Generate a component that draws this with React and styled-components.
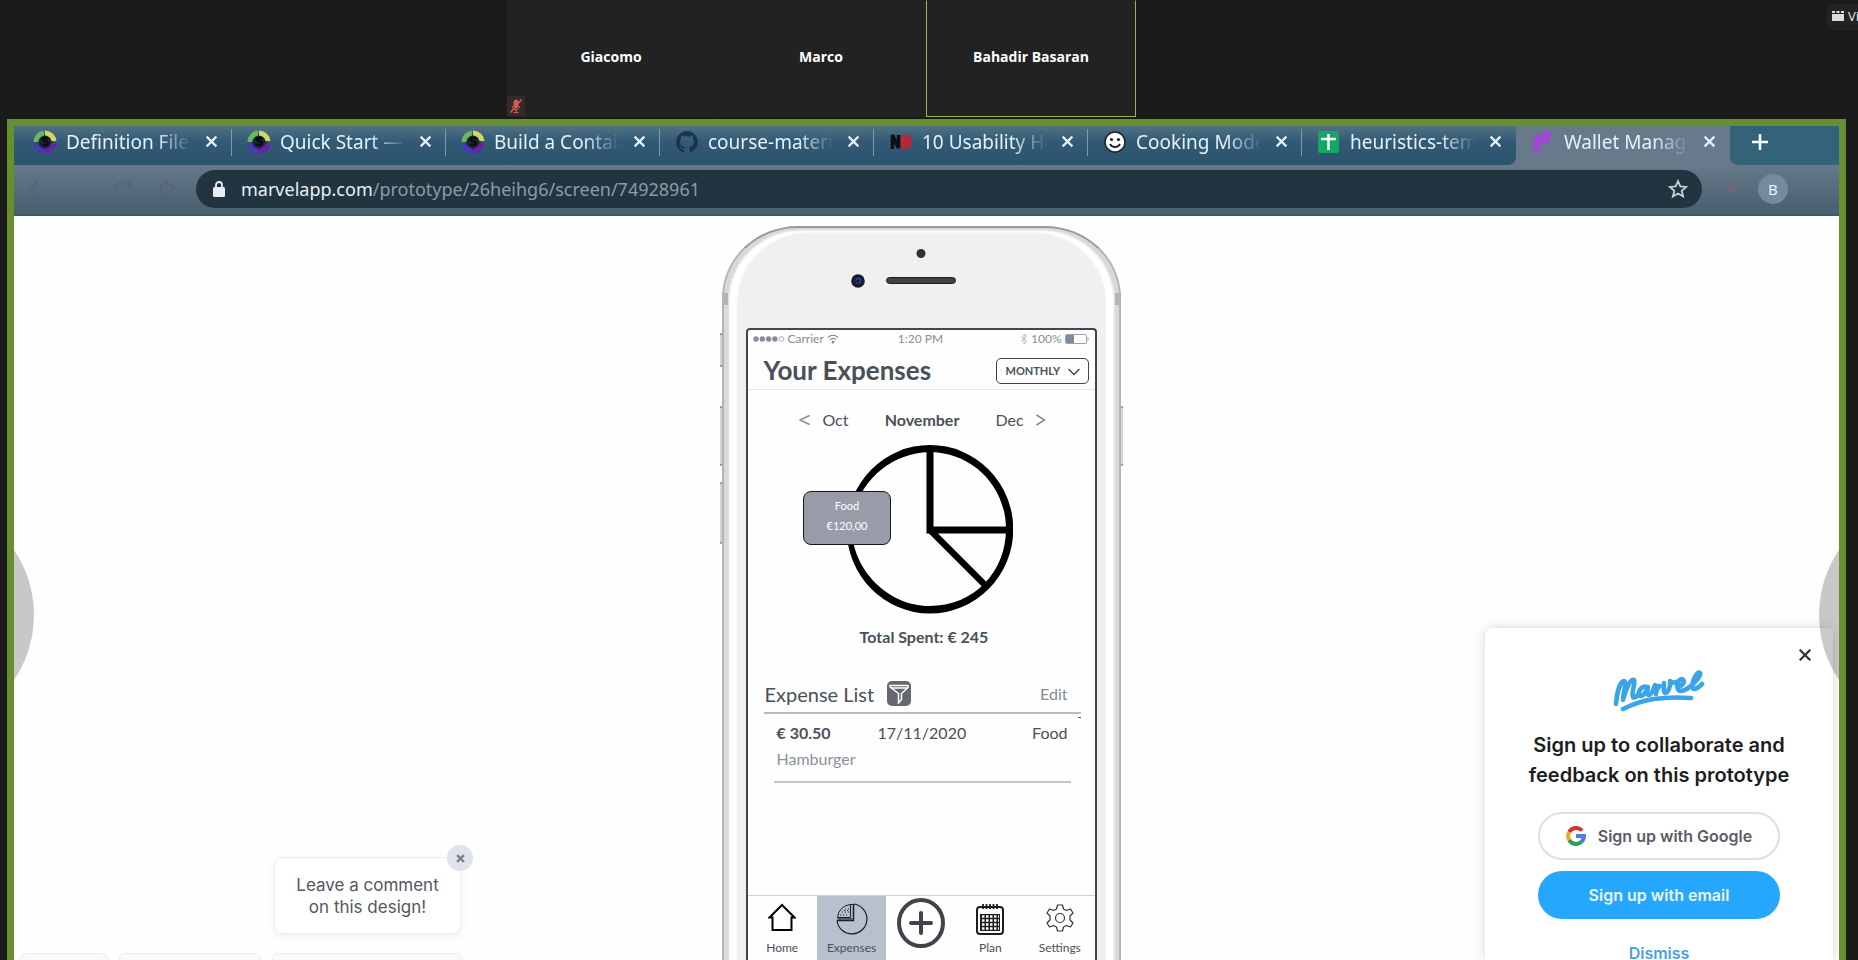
import React from "react";
import styled, { createGlobalStyle, css } from "styled-components";

const GlobalStyle = createGlobalStyle`
  *, *::before, *::after { box-sizing: border-box; }
  html, body { margin: 0; background: #1a1a1a; }
  button, select { font: inherit; color: inherit; margin: 0; padding: 0; border: 0; background: none; cursor: pointer; }
  a { color: inherit; text-decoration: none; }
  h1, h2, h3, p, ul { margin: 0; padding: 0; list-style: none; }
  svg { display: block; flex: none; }
`;

/* ---------- Meeting window ---------- */

const Meeting = styled.div`
  display: flex;
  flex-direction: column;
  height: 100vh;
  overflow: hidden;
  background: #1a1a1a;
  font-family: "Open Sans", "Noto Sans", sans-serif;
`;

const Gallery = styled.header`
  position: relative;
  display: flex;
  justify-content: center;
  flex: none;
  height: 119px;
  padding: 0 216px 2px 0;
`;

const Participant = styled.div`
  position: relative;
  display: flex;
  align-items: center;
  justify-content: center;
  width: 210px;
  padding-bottom: 4px;
  border: 1px solid ${(p) => (p.$speaking ? "#93b55c" : "#222")};
  border-top-color: #222;
  border-left-color: ${(p) => (p.$speaking ? "#93b55c" : "#1e1e1e")};
  background: #222;
  color: #fff;
  font-size: 14px;
  font-weight: 700;
  line-height: 20px;
`;

const MutedBadge = styled.span`
  position: absolute;
  left: 0;
  bottom: 0;
  display: grid;
  place-items: center;
  width: 18px;
  height: 20px;
  background: #332a2a;
`;

const ViewButton = styled.button`
  && {
    position: absolute;
    top: 4px;
    right: -36px;
    display: flex;
    align-items: center;
    gap: 4px;
    padding: 2px 6px 4px;
    width: 68px;
    height: 26px;
    border-radius: 6px;
    background: #222225;
    color: #e8e8e8;
    font-size: 13px;
    line-height: 18px;
  }
`;

const Share = styled.main`
  display: flex;
  flex-direction: column;
  flex: 1;
  min-height: 0;
  margin: 0 12px 0 7px;
  border: 7px solid #668f2d;
  border-bottom: 0;
`;

/* ---------- Browser chrome ---------- */

const TabStrip = styled.nav`
  display: flex;
  flex: none;
  height: 39px;
  padding-left: 4px;
  background: linear-gradient(#4f7183, #325a75 40%, #2d536d);
  font-family: "Noto Sans", sans-serif;
`;

const TabItem = styled.div`
  position: relative;
  display: flex;
  align-items: center;
  width: 214px;
  min-width: 0;
  padding: 0 13px 8px 15px;
  color: #e4f1f8;
  ${(p) =>
    p.$active
      ? css`
          background: #67798a;
        `
      : css`
          &::after {
            content: "";
            position: absolute;
            right: 0;
            top: 3px;
            width: 1px;
            height: 27px;
            background: ${p.$last ? "transparent" : "#7c98a9"};
          }
        `}
`;

const TabLink = styled.a`
  display: flex;
  align-items: center;
  flex: 1;
  min-width: 0;
  gap: 9px;
`;

const TabTitle = styled.span`
  flex: none;
  width: 128px;
  overflow: hidden;
  white-space: nowrap;
  font-size: 19px;
  line-height: 28px;
  mask-image: linear-gradient(90deg, #000 70%, transparent 98%);
`;

const TabClose = styled.button`
  && {
    display: grid;
    place-items: center;
    width: 16px;
    height: 28px;
  }
`;

const StripEnd = styled.div`
  flex: 1;
  padding: 3px 0 0 18px;
  border-bottom-left-radius: 8px;
  background: #346379;
  color: #fff;
`;

const Behind = styled.div`
  display: flex;
  flex: ${(p) => (p.$grow ? 1 : "none")};
  background: #67798a;
`;

const InactiveFill = styled.div`
  display: flex;
  border-bottom-right-radius: 8px;
  background: linear-gradient(#4f7183, #325a75 40%, #2d536d);
`;

const Toolbar = styled.div`
  display: flex;
  align-items: center;
  flex: none;
  height: 51px;
  padding: 5px 51px 6px 12px;
  border-bottom: 2px solid #435866;
  background: linear-gradient(#67798a, #4b6273 85%);
`;

const HistoryButtons = styled.div`
  display: flex;
  align-items: center;
  justify-content: space-between;
  width: 152px;
  margin-right: 18px;
  color: #54636f;
`;

const Omnibox = styled.div`
  display: flex;
  align-items: center;
  flex: 1;
  height: 38px;
  padding: 0 14px 0 16px;
  border-radius: 19px;
  background: #223440;
  color: #8d9ba5;
  font-family: "Noto Sans", sans-serif;
  font-size: 18px;
  line-height: 26px;
`;

const Address = styled.p`
  flex: 1;
  margin-left: 15px;
`;

const Host = styled.span`
  color: #e9f0f3;
`;

const Extension = styled.button`
  && {
    width: 12px;
    height: 12px;
    margin: 0 20px 0 24px;
    border-radius: 50%;
    background: radial-gradient(#84606f, transparent 70%);
  }
`;

const Avatar = styled.button`
  && {
    width: 30px;
    height: 30px;
    border-radius: 50%;
    background: #738b9a;
    color: #e9f2f6;
    font: 15px/30px "Noto Sans", sans-serif;
  }
`;

/* ---------- Prototype page ---------- */

const Page = styled.section`
  position: relative;
  display: flex;
  justify-content: center;
  flex: 1;
  min-height: 0;
  overflow: hidden;
  padding: 10px 11px 0 0;
  background: #fefefe;
  font-family: Inter, sans-serif;
`;

const PagerButton = styled.button`
  && {
    position: absolute;
    top: 283px;
    ${(p) => p.$side}: -212px;
    width: 232px;
    height: 232px;
    border-radius: 50%;
    background: #00000036;
  }
`;

const Phone = styled.div`
  position: relative;
  display: flex;
  flex-direction: column;
  width: 399px;
  padding: 0 22px;
  border: 2px solid #b4b4b6;
  border-top-color: #999;
  border-bottom: 0;
  border-radius: 76px 76px 0 0 / 72px 72px 0 0;
  background: #eff0f2;
  box-shadow: inset 5px 2px 2px #d9d9db, inset -5px 2px 2px #d9d9db,
    inset 13px 4px 2px #fff, inset -13px 4px 2px #fff;
`;

const SideKey = styled.span`
  position: absolute;
  ${(p) => p.$side}: -4px;
  top: ${(p) => p.$top}px;
  width: 2px;
  height: ${(p) => p.$length}px;
  border: 1px solid #909092;
  border-width: 2px 0;
  border-radius: 2px;
  background: #d4d4d6;
`;

const AntennaBand = styled.span`
  position: absolute;
  ${(p) => p.$side}: -2px;
  top: 65px;
  width: 6px;
  height: 12px;
  background: #b4b4b7;
`;

const Earpiece = styled.div`
  display: flex;
  justify-content: center;
  flex: none;
  height: 100px;
  padding-top: 21px;
`;

const Screen = styled.div`
  display: flex;
  flex-direction: column;
  flex: 1;
  min-height: 0;
  border: 2px solid #454648;
  border-bottom: 0;
  border-radius: 4px 4px 0 0;
  background: #fefefe;
  color: #4a5058;
  font-family: Lato, sans-serif;
`;

const StatusBar = styled.div`
  display: grid;
  grid-template-columns: 1fr auto 1fr;
  align-items: center;
  height: 18px;
  padding: 0 6px 0 5px;
  color: #868d98;
  font-size: 12px;
  line-height: 16px;
`;

const StatusGroup = styled.span`
  display: flex;
  align-items: center;
  justify-content: ${(p) => (p.$end ? "flex-end" : "flex-start")};
  gap: 3px;
`;

const ScreenHeader = styled.header`
  display: flex;
  align-items: center;
  justify-content: space-between;
  height: 42px;
  padding: 2px 6px 0 16px;
  border-bottom: 1px solid #e4e5e7;
`;

const ScreenTitle = styled.h1`
  font-size: 26px;
  font-weight: 700;
  line-height: 32px;
`;

const Picker = styled.label`
  position: relative;
  display: flex;
  align-items: center;
  width: 93px;
  height: 26px;
  margin-top: 3px;
  border: 1px solid #3f444a;
  border-radius: 5px;

  svg { position: absolute; right: 8px; top: 9px; pointer-events: none; }
`;

const PeriodSelect = styled.select`
  && {
    width: 100%;
    height: 100%;
    padding: 0 24px 2px 9px;
    appearance: none;
    font-size: 11px;
    font-weight: 700;
  }
`;

const Months = styled.nav`
  display: grid;
  grid-template-columns: 1fr auto 1fr;
  align-items: center;
  height: 60px;
  padding: 0 49px 0 51px;
  font-size: 16px;
  line-height: 22px;
`;

const MonthButton = styled.button`
  && {
    display: flex;
    align-items: center;
    justify-content: space-between;
    width: 50px;
    justify-self: ${(p) => (p.$next ? "end" : "start")};
  }
  svg { color: #838995; }
`;

const CurrentMonth = styled.strong`
  font-weight: 700;
`;

const Chart = styled.figure`
  position: relative;
  align-self: center;
  margin: -5px 0 0 18px;
`;

const SliceTip = styled.figcaption`
  position: absolute;
  left: -44px;
  top: 46px;
  width: 88px;
  height: 54px;
  padding-top: 4px;
  border: 1px solid #17191c;
  border-radius: 8px;
  background: #979ca8;
  color: #fff;
  font-size: 11px;
  line-height: 20px;
  text-align: center;
`;

const Total = styled.p`
  margin-top: 12px;
  padding-left: 6px;
  font-size: 16px;
  font-weight: 700;
  line-height: 22px;
  text-align: center;
`;

const ListHeader = styled.header`
  display: flex;
  align-items: center;
  margin: 29px 14px 0 16px;
  height: 37px;
  padding: 0 13px 2px 1px;
  border-bottom: 2px solid #b9babc;
`;

const ListTitle = styled.h2`
  font-size: 20px;
  font-weight: 400;
  line-height: 28px;
`;

const FilterButton = styled.button`
  && {
    display: grid;
    place-items: center;
    width: 24px;
    height: 25px;
    margin-left: 13px;
    border-radius: 5px;
    background: #65686e;
    color: #fff;
  }
`;

const EditButton = styled.button`
  && {
    margin-left: auto;
    color: #858b96;
    font-size: 16px;
  }
`;

const ListMark = styled.span`
  align-self: flex-end;
  width: 3px;
  height: 1px;
  margin: 3px 14px 0 0;
  background: #555;
`;

const Expense = styled.li`
  display: grid;
  grid-template-columns: 101px 1fr auto;
  margin: 2px 24px 0 26px;
  padding: 0 3px 9px;
  border-bottom: 2px solid #c4c5c7;
  font-size: 16px;
  line-height: 26px;
`;

const Amount = styled.strong`
  font-weight: 700;
`;

const Note = styled.span`
  grid-column: 1 / -1;
  color: #8a919c;
`;

const AppNav = styled.nav`
  display: grid;
  grid-template-columns: repeat(5, 1fr);
  height: 65px;
  margin-top: auto;
  border-top: 1px solid #cfd2d5;
`;

const NavItem = styled.a`
  display: flex;
  flex-direction: column;
  align-items: center;
  justify-content: space-between;
  padding: 2px 0 4px;
  background: ${(p) => (p.$active ? "#b7c0cc" : "transparent")};
  font-size: 12px;
  line-height: 16px;

  svg { margin-top: ${(p) => (p.$large ? 0 : 5)}px; }
`;

/* ---------- Page overlays ---------- */

const CommentHint = styled.aside`
  position: absolute;
  left: 260px;
  bottom: 26px;
  width: 187px;
  padding: 16px 12px 15px;
  border: 1px solid #ededf2;
  border-radius: 8px;
  background: #fff;
  box-shadow: 0 3px 8px #0000000f;
  color: #55565f;
  font-size: 17px;
  line-height: 22px;
  text-align: center;
`;

const HintClose = styled.button`
  && {
    position: absolute;
    top: -13px;
    right: -13px;
    display: grid;
    place-items: center;
    width: 26px;
    height: 26px;
    border-radius: 50%;
    background: #dfe3ee;
    color: #7b7f8c;
  }
`;

const Dock = styled.div`
  position: absolute;
  left: 6px;
  bottom: 0;
  display: grid;
  grid-template-columns: 88px 142px 190px;
  gap: 11px;
  height: 7px;
`;

const DockPanel = styled.div`
  border: 1px solid #ececf1;
  border-bottom: 0;
  border-radius: 6px 6px 0 0;
  background: #f9f9fc;
`;

const SignUp = styled.aside`
  position: absolute;
  top: 412px;
  right: 6px;
  bottom: 0;
  display: flex;
  flex-direction: column;
  align-items: center;
  width: 348px;
  padding-top: 42px;
  border-radius: 8px 0 0 0;
  background: #fff;
  box-shadow: 0 0 12px #00003028;
`;

const SignUpClose = styled.button`
  && {
    position: absolute;
    top: 18px;
    right: 19px;
    padding: 2px;
    color: #333338;
  }
`;

const SignUpTitle = styled.h2`
  margin: 18px 0 22px;
  color: #1d1d22;
  font-size: 20px;
  font-weight: 600;
  line-height: 30px;
  text-align: center;
`;

const PillButton = styled.button`
  && {
    display: flex;
    flex: none;
    align-items: center;
    justify-content: center;
    gap: 12px;
    width: 242px;
    height: 48px;
    margin-bottom: 11px;
    border: ${(p) => (p.$primary ? "0" : "2px solid #dedee4")};
    border-radius: 24px;
    background: ${(p) => (p.$primary ? "#26a7fe" : "#fff")};
    color: ${(p) => (p.$primary ? "#e6f6ff" : "#5c5c68")};
    font-size: 16px;
    font-weight: 600;
  }
`;

const Dismiss = styled.button`
  && {
    margin-top: 10px;
    color: #4c9fd9;
    font-size: 16px;
    font-weight: 600;
    line-height: 26px;
  }
`;

/* ---------- Drawings ---------- */

const Cross = ({ size = 12, weight = 2 }) => (
  <svg width={size} height={size} viewBox="0 0 12 12" stroke="currentColor" strokeWidth={weight} aria-hidden="true">
    <path d="M1.5 1.5l9 9M10.5 1.5l-9 9" />
  </svg>
);

const SIcon = () => (
  <svg width="24" height="24" viewBox="0 0 24 24" fill="none" strokeWidth="5">
    <circle cx="12" cy="12" r="8" fill="#1c2733" />
    <path d="M3 12a9 9 0 0 1 8-9" stroke="#67b860" />
    <path d="M12 3a9 9 0 0 1 9 8" stroke="#d2d569" />
    <path d="M21 13a9 9 0 0 1-9 8" stroke="#6a21a8" />
    <path d="M11 21a9 9 0 0 1-8-8" stroke="#4b35bd" />
    <path d="M15 9c-2-2-6-1-5 1s5 1 5 3-4 3-6 1" stroke="#0a0c10" strokeWidth="2.4" />
  </svg>
);

const GithubIcon = () => (
  <svg width="24" height="24" viewBox="0 0 24 24">
    <path fill="#1d3446" d="M12 1A11 11 0 0 0 8.500 22.400c.6.100.8-.2.800-.5v-2c-3 .6-3.700-1.400-3.700-1.400-.5-1.200-1.200-1.600-1.200-1.600-1-.7 0-.6 0-.6 1.100 0 1.700 1.100 1.700 1.100 1 1.700 2.600 1.200 3.200.9.100-.7.400-1.200.7-1.400-2.400-.3-5-1.200-5-5.400 0-1.200.4-2.200 1.100-3-.1-.3-.5-1.400.1-2.900 0 0 .9-.3 3 1.100a10 10 0 0 1 5.500 0c2.100-1.400 3-1.100 3-1.100.6 1.500.2 2.600.1 2.900.7.800 1.100 1.800 1.100 3 0 4.200-2.600 5.100-5 5.400.4.300.7 1 .7 2v3c0 .3.200.6.800.5A11 11 0 0 0 12 1z" />
  </svg>
);

const NNIcon = () => (
  <svg width="24" height="24" viewBox="0 0 24 24" fill="none" strokeWidth="3.600">
    <path d="M3.500 19V5l6 13V5" stroke="#0c0f13" />
    <path d="M14 19V5l6 13V5" stroke="#c81f31" />
  </svg>
);

const SmileIcon = () => (
  <svg width="24" height="24" viewBox="0 0 24 24">
    <circle cx="12" cy="12" r="10" fill="#fff" stroke="#17232c" strokeWidth="1.500" />
    <circle cx="8.500" cy="9.500" r="1.600" fill="#17232c" />
    <circle cx="15.500" cy="9.500" r="1.600" fill="#17232c" />
    <path d="M7 14c2 4 8 4 10 0" fill="none" stroke="#17232c" strokeWidth="1.800" />
  </svg>
);

const SheetIcon = () => (
  <svg width="24" height="24" viewBox="0 0 24 24">
    <rect x="1" y="1" width="21" height="22" rx="2" fill="#14a765" />
    <path d="M11.500 4v16M4 9h15" stroke="#fff" strokeWidth="2.500" />
  </svg>
);

const MarvelMark = () => (
  <svg width="24" height="24" viewBox="0 0 24 24" fill="none" stroke="#a93fe6" strokeWidth="2.800" strokeLinecap="round" strokeLinejoin="round">
    <path d="M3 18C4 12 5 8 8 6c1 3-1 6-1 9 1-5 3-9 6-11 1 3-1 6-1 9 1-5 3-9 6-11 0 4-1 7-2 11M4 22c3-1 4-3 5-5" />
  </svg>
);

const MutedMic = () => (
  <svg width="14" height="16" viewBox="0 0 14 16" fill="none" stroke="#de5a5a">
    <rect x="5" y="2" width="4" height="8" rx="2" fill="#de5a5a" />
    <path d="M3.500 8c0 5 7 5 7 0M7 11v3M4.500 14.500h5" />
    <path d="M12.500 1.500l-11 13" strokeWidth="1.500" />
  </svg>
);

const GalleryIcon = () => (
  <svg width="12" height="12" viewBox="0 0 12 12" fill="#dcdcdc">
    <path d="M0 1h3v2H0zM4.500 1h3v2h-3zM9 1h3v2H9zM0 4h12v7H0z" />
  </svg>
);

const HistoryIcons = () => (
  <svg width="152" height="24" viewBox="0 0 152 24" fill="none" stroke="currentColor" strokeWidth="2">
    <path d="M12 4l-8 8 8 8M90 12c0-8 10-9 15-4M105 4v5h-6M132 12l8-8 8 8M135 11v9h10v-9" opacity=".6" />
  </svg>
);

const Padlock = () => (
  <svg width="14" height="18" viewBox="0 0 14 18">
    <rect x="1" y="7" width="12" height="10" rx="1.500" fill="#e8eff2" />
    <path d="M4 8V5a3 3 0 0 1 6 0v3" fill="none" stroke="#e8eff2" strokeWidth="1.800" />
  </svg>
);

const Star = () => (
  <svg width="20" height="20" viewBox="0 0 20 20" fill="none" stroke="#c9d0d3" strokeWidth="1.800">
    <path d="M10 2l2.300 5.400 5.900.5-4.500 3.900 1.400 5.700L10 14.500l-5.100 3 1.400-5.700L1.800 7.900l5.900-.5z" />
  </svg>
);

const Plus = () => (
  <svg width="24" height="26" viewBox="0 0 24 26" stroke="currentColor" strokeWidth="2.500">
    <path d="M12 5v16M4 13h16" />
  </svg>
);

const EarpieceDrawing = () => (
  <svg width="140" height="40" viewBox="0 0 140 40">
    <circle cx="70" cy="4.500" r="4.500" fill="#323234" />
    <circle cx="7" cy="32" r="6.800" fill="#1a1b28" />
    <circle cx="7.500" cy="31.500" r="3.200" fill="#26398f" />
    <circle cx="7" cy="32" r="1.300" fill="#101326" />
    <rect x="35.500" y="28.500" width="69" height="6" rx="3" fill="#424244" stroke="#1f1f21" />
  </svg>
);

const SignalDots = () => (
  <svg width="32" height="8" viewBox="0 0 32 8" fill="#868d98">
    <circle cx="3" cy="4" r="2.700" /><circle cx="9.300" cy="4" r="2.700" />
    <circle cx="15.600" cy="4" r="2.700" /><circle cx="21.900" cy="4" r="2.700" />
    <circle cx="28.500" cy="4" r="2.400" fill="none" stroke="#9aa0aa" strokeWidth=".8" />
  </svg>
);

const Wifi = () => (
  <svg width="12" height="10" viewBox="0 0 12 10" fill="none" stroke="#7c8592" strokeWidth="1.200">
    <path d="M1 3.500c3-3 7-3 10 0M3 5.800c2-2 4-2 6 0" /><circle cx="6" cy="8.200" r=".8" />
  </svg>
);

const Bluetooth = () => (
  <svg width="8" height="12" viewBox="0 0 8 12" fill="none" stroke="#b4b8bf">
    <path d="M1 3.500l6 5L4 11V1l3 2.500-6 5" />
  </svg>
);

const Battery = () => (
  <svg width="24" height="10" viewBox="0 0 24 10">
    <rect x=".5" y=".5" width="21" height="9" rx="1.500" fill="#fff" stroke="#9aa3b1" />
    <rect x="1" y="1" width="8" height="8" fill="#7d8ba3" />
    <path d="M23 3.500v3" stroke="#9aa3b1" />
  </svg>
);

const ChevronDown = () => (
  <svg width="12" height="8" viewBox="0 0 12 8" fill="none" stroke="#35505a" strokeWidth="1.500">
    <path d="M.5 1L6 6.500 11.500 1" />
  </svg>
);

const Angle = ({ next }) => (
  <svg width="11" height="12" viewBox="0 0 11 12" fill="none" stroke="currentColor" strokeWidth="1.500">
    <path d={next ? "M1.500 1l8 5-8 5" : "M10.500 1.500L1 6l9.500 4.500"} />
  </svg>
);

const Pie = () => (
  <svg width="166" height="169" viewBox="0 0 166 169" fill="none" stroke="#000">
    <path
      d="M83 0A83 84 0 0 1 83 168.500A83 84 0 0 1 83 0ZM82 7C40 8 5 43 5 84S42 161 82 161C128 161 159 126 159 84S126 7 82 7Z"
      fill="#000"
      fillRule="evenodd"
      stroke="none"
    />
    <path d="M83 4v81h77" strokeWidth="7" />
    <path d="M82 84l56 56" strokeWidth="6.500" />
  </svg>
);

const Funnel = () => (
  <svg width="20" height="20" viewBox="0 0 20 20" fill="none" stroke="currentColor" strokeWidth="1.500">
    <path d="M1 1.500h18v2l-6.500 6v6L9.500 19V9.500L1 3z" />
    <path d="M2 4h16" />
  </svg>
);

const HomeIcon = () => (
  <svg width="28" height="28" viewBox="0 0 28 28" fill="none" stroke="#000" strokeWidth="2">
    <path d="M1.500 14.500L14 2l12.500 12.500h-3V27h-19V14.500z" />
  </svg>
);

const ExpensesIcon = () => (
  <svg width="32" height="32" viewBox="0 0 32 32" fill="none" stroke="#1c1f24">
    <path d="M17.500 1A15 15 0 1 1 1 17.500" strokeWidth="1.200" />
    <path d="M17.500 1v16.500H1" strokeWidth="1.500" />
    <path d="M14.500 1.500v13H1.500A14 14 0 0 1 14.500 1.500zM14.500 1.500h3" />
    <path d="M1.500 16h15" strokeWidth="2" stroke="#555b64" />
    <path d="M6 9h7M9 6h4M4 12h9M8 7.500h5" strokeWidth="1" strokeDasharray="1 2" />
  </svg>
);

const AddIcon = () => (
  <svg width="48" height="50" viewBox="0 0 48 50" fill="none" stroke="#3f444a">
    <ellipse cx="24" cy="25" rx="22" ry="23" strokeWidth="4" />
    <path d="M24 15v20M14 25h20" strokeWidth="4" strokeLinecap="round" />
  </svg>
);

const PlanIcon = () => (
  <svg width="28" height="32" viewBox="0 0 28 32" fill="none" stroke="#1b1d20">
    <rect x="1" y="4" width="26" height="27" rx="3" strokeWidth="2" />
    <path d="M7 1v5M10.500 1v5M14 1v5M17.500 1v5M21 1v5" strokeWidth="1.800" />
    <rect x="4" y="11" width="20" height="17" fill="#1b1d20" stroke="none" />
    <path d="M6 13.500h17M6 17.500h17M6 21.500h17M6 25.500h17" stroke="#fff" strokeWidth="2.500" strokeDasharray="2.500 1.500" />
  </svg>
);

const SettingsIcon = () => (
  <svg width="28" height="30" viewBox="0 0 28 30" fill="none" stroke="#2e3338" strokeWidth="1.200">
    <path d="M11.500 2h5l1 4 3 1.500 4-1.500L27 10l-3 3v4l3 3-2.500 4-4-1.500-3 1.500-1 4h-5l-1-4-3-1.500-4 1.500L1 20l3-3v-4l-3-3 2.500-4 4 1.500 3-1.500z" strokeLinejoin="round" />
    <circle cx="14" cy="15" r="4.500" />
  </svg>
);

const MarvelLogo = () => (
  <svg width="92" height="42" viewBox="0 0 92 42" fill="none" stroke="#39a4e8" strokeWidth="4.600" strokeLinecap="round" strokeLinejoin="round" role="img" aria-label="Marvel">
    <path d="M3 34C4 22 7 12 11 11c3 0-1 14-1 19 3-12 8-22 11-20 2 2-3 12-1 17 1 1 3 0 5-2" />
    <path d="M34 17c-5-2-9 4-8 8 2 3 7-1 9-8-1 5-1 8 1 8s4-4 6-10c0 3 3 1 5 1-3 2-4 5-4 8" />
    <path d="M51 13c0 6-1 9 1 10 3 0 6-7 5-12 2 2 4 2 6 1" />
    <path d="M65 17c5-1 8-7 4-8-5 0-7 12-1 12 9-1 21-16 19-18-4-3-11 16-6 16 3 0 6-3 8-5" />
    <path d="M10 39c20-10 40-13 68-11" />
  </svg>
);

const GoogleLogo = () => (
  <svg width="20" height="20" viewBox="0 0 20 20" fill="none" strokeWidth="4">
    <path d="M16 4.500A8 8 0 0 0 3.200 6.100" stroke="#d9332c" />
    <path d="M3.200 6.100a8 8 0 0 0 0 7.800" stroke="#eda928" />
    <path d="M3.200 13.900A8 8 0 0 0 15 16.200" stroke="#2f9d50" />
    <path d="M15 16.200A8 8 0 0 0 18 10h-8" stroke="#4d7fe0" />
  </svg>
);

/* ---------- Data ---------- */

const participants = [
  { name: "Giacomo", muted: true },
  { name: "Marco" },
  { name: "Bahadir Basaran", speaking: true },
];

const inactiveTabs = [
  { title: "Definition Files", Icon: SIcon },
  { title: "Quick Start —", Icon: SIcon },
  { title: "Build a Container", Icon: SIcon },
  { title: "course-material", Icon: GithubIcon },
  { title: "10 Usability Heur", Icon: NNIcon },
  { title: "Cooking Mode", Icon: SmileIcon },
  { title: "heuristics-temp", Icon: SheetIcon },
];

const navItems = [
  { label: "Home", Icon: HomeIcon },
  { label: "Expenses", Icon: ExpensesIcon, active: true },
  { label: "", Icon: AddIcon, large: true },
  { label: "Plan", Icon: PlanIcon },
  { label: "Settings", Icon: SettingsIcon },
];

const Tab = ({ title, Icon, active, last }) => (
  <TabItem $active={active} $last={last}>
    <TabLink href="#tab">
      <Icon />
      <TabTitle>{title}</TabTitle>
    </TabLink>
    <TabClose aria-label={`Close ${title}`}>
      <Cross size={13} />
    </TabClose>
  </TabItem>
);

const PhoneApp = () => (
  <Screen>
    <StatusBar>
      <StatusGroup><SignalDots />Carrier<Wifi /></StatusGroup>
      <span>1:20 PM</span>
      <StatusGroup $end><Bluetooth />100%<Battery /></StatusGroup>
    </StatusBar>
    <ScreenHeader>
      <ScreenTitle>Your Expenses</ScreenTitle>
      <Picker>
        <PeriodSelect aria-label="Period" defaultValue="MONTHLY">
          <option>MONTHLY</option>
        </PeriodSelect>
        <ChevronDown />
      </Picker>
    </ScreenHeader>
    <Months>
      <MonthButton><Angle />Oct</MonthButton>
      <CurrentMonth>November</CurrentMonth>
      <MonthButton $next>Dec<Angle next /></MonthButton>
    </Months>
    <Chart>
      <Pie />
      <SliceTip>Food<br />€120,00</SliceTip>
    </Chart>
    <Total>Total Spent: € 245</Total>
    <ListHeader>
      <ListTitle>Expense List</ListTitle>
      <FilterButton aria-label="Filter"><Funnel /></FilterButton>
      <EditButton>Edit</EditButton>
    </ListHeader>
    <ListMark />
    <ul>
      <Expense>
        <Amount>€ 30.50</Amount>
        <span>17/11/2020</span>
        <span>Food</span>
        <Note>Hamburger</Note>
      </Expense>
    </ul>
    <AppNav>
      {navItems.map(({ label, Icon, active, large }) => (
        <NavItem key={label || "add"} href="#screen" aria-label={label || "Add"} $active={active} $large={large}>
          <Icon />
          {label}
        </NavItem>
      ))}
    </AppNav>
  </Screen>
);

export default function App() {
  return (
    <Meeting>
      <GlobalStyle />
      <Gallery>
        {participants.map((p) => (
          <Participant key={p.name} $speaking={p.speaking}>
            {p.name}
            {p.muted && <MutedBadge><MutedMic /></MutedBadge>}
          </Participant>
        ))}
        <ViewButton><GalleryIcon />View</ViewButton>
      </Gallery>
      <Share>
        <TabStrip>
          <Behind>
            <InactiveFill>
              {inactiveTabs.map((t, i) => (
                <Tab key={t.title} {...t} last={i === inactiveTabs.length - 1} />
              ))}
            </InactiveFill>
          </Behind>
          <Tab title="Wallet Manager" Icon={MarvelMark} active />
          <Behind $grow>
            <StripEnd><button aria-label="New tab"><Plus /></button></StripEnd>
          </Behind>
        </TabStrip>
        <Toolbar>
          <HistoryButtons><HistoryIcons /></HistoryButtons>
          <Omnibox>
            <Padlock />
            <Address><Host>marvelapp.com</Host>/prototype/26heihg6/screen/74928961</Address>
            <button aria-label="Bookmark"><Star /></button>
          </Omnibox>
          <Extension aria-label="Extension" />
          <Avatar>B</Avatar>
        </Toolbar>
        <Page>
          <Phone>
            <AntennaBand $side="left" />
            <AntennaBand $side="right" />
            <SideKey $side="left" $top={105} $length={34} />
            <SideKey $side="left" $top={178} $length={60} />
            <SideKey $side="left" $top={254} $length={62} />
            <SideKey $side="right" $top={178} $length={60} />
            <Earpiece><EarpieceDrawing /></Earpiece>
            <PhoneApp />
          </Phone>
          <CommentHint>
            Leave a comment<br />on this design!
            <HintClose aria-label="Close hint"><Cross size={9} weight={3} /></HintClose>
          </CommentHint>
          <Dock><DockPanel /><DockPanel /><DockPanel /></Dock>
          <SignUp>
            <SignUpClose aria-label="Close"><Cross size={14} weight={2} /></SignUpClose>
            <MarvelLogo />
            <SignUpTitle>Sign up to collaborate and<br />feedback on this prototype</SignUpTitle>
            <PillButton><GoogleLogo />Sign up with Google</PillButton>
            <PillButton $primary>Sign up with email</PillButton>
            <Dismiss>Dismiss</Dismiss>
          </SignUp>
          <PagerButton $side="left" aria-label="Previous screen" />
          <PagerButton $side="right" aria-label="Next screen" />
        </Page>
      </Share>
    </Meeting>
  );
}
